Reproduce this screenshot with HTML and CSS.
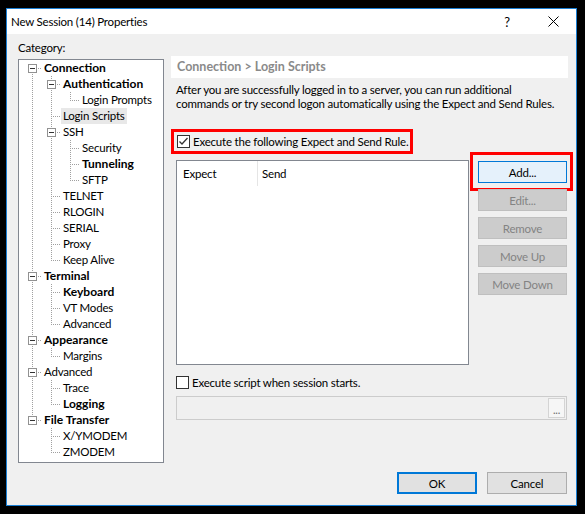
FILE: index.html
```html
<!DOCTYPE html>
<html>
<head>
<meta charset="utf-8">
<link rel="stylesheet" href="styles.css">
</head>
<body>
<div class="window">
  <div class="titlebar">
    <span class="title">New Session (14) Properties</span>
    <div class="caption-btns">
      <span class="cap help">?</span>
      <span class="cap close"><svg width="11" height="11" viewBox="0 0 11 11"><path d="M0.5 0.5 L10.5 10.5 M10.5 0.5 L0.5 10.5" stroke="#000" stroke-width="1" fill="none"/></svg></span>
    </div>
  </div>
  <div class="content">
    <div class="main">
      <div class="left">
        <div class="cat-label">Category:</div>
        <div class="tree">
          <div class="row"><span class="c first"><span class="box"></span></span><span class="t b">Connection</span></div>
          <div class="row"><span class="c pipe"></span><span class="c tee"><span class="box"></span></span><span class="t b">Authentication</span></div>
          <div class="row"><span class="c pipe"></span><span class="c pipe"></span><span class="c ell"></span><span class="t">Login Prompts</span></div>
          <div class="row"><span class="c pipe"></span><span class="c tee"></span><span class="t sel">Login Scripts</span></div>
          <div class="row"><span class="c pipe"></span><span class="c tee"><span class="box"></span></span><span class="t">SSH</span></div>
          <div class="row"><span class="c pipe"></span><span class="c pipe"></span><span class="c tee"></span><span class="t">Security</span></div>
          <div class="row"><span class="c pipe"></span><span class="c pipe"></span><span class="c tee"></span><span class="t b">Tunneling</span></div>
          <div class="row"><span class="c pipe"></span><span class="c pipe"></span><span class="c ell"></span><span class="t">SFTP</span></div>
          <div class="row"><span class="c pipe"></span><span class="c tee"></span><span class="t">TELNET</span></div>
          <div class="row"><span class="c pipe"></span><span class="c tee"></span><span class="t">RLOGIN</span></div>
          <div class="row"><span class="c pipe"></span><span class="c tee"></span><span class="t">SERIAL</span></div>
          <div class="row"><span class="c pipe"></span><span class="c tee"></span><span class="t">Proxy</span></div>
          <div class="row"><span class="c pipe"></span><span class="c ell"></span><span class="t">Keep Alive</span></div>
          <div class="row"><span class="c tee"><span class="box"></span></span><span class="t b">Terminal</span></div>
          <div class="row"><span class="c pipe"></span><span class="c tee"></span><span class="t b">Keyboard</span></div>
          <div class="row"><span class="c pipe"></span><span class="c tee"></span><span class="t">VT Modes</span></div>
          <div class="row"><span class="c pipe"></span><span class="c ell"></span><span class="t">Advanced</span></div>
          <div class="row"><span class="c tee"><span class="box"></span></span><span class="t b">Appearance</span></div>
          <div class="row"><span class="c pipe"></span><span class="c ell"></span><span class="t">Margins</span></div>
          <div class="row"><span class="c tee"><span class="box"></span></span><span class="t">Advanced</span></div>
          <div class="row"><span class="c pipe"></span><span class="c tee"></span><span class="t">Trace</span></div>
          <div class="row"><span class="c pipe"></span><span class="c ell"></span><span class="t b">Logging</span></div>
          <div class="row"><span class="c ell"><span class="box"></span></span><span class="t b">File Transfer</span></div>
          <div class="row"><span class="c"></span><span class="c tee"></span><span class="t">X/YMODEM</span></div>
          <div class="row"><span class="c"></span><span class="c ell"></span><span class="t">ZMODEM</span></div>
        </div>
      </div>
      <div class="right">
        <div class="page-header">Connection &gt; Login Scripts</div>
        <div class="pane">
          <p class="desc">After you are successfully logged in to a server, you can run additional<br>commands or try second logon automatically using the Expect and Send Rules.</p>
          <div class="check-row marked">
            <span class="cb"><svg width="11" height="11" viewBox="0 0 11 11"><path d="M1.5 5.5 L4 8 L9.5 2" stroke="#333" stroke-width="1.3" fill="none"/></svg></span>
            <span>Execute the following Expect and Send Rule.</span>
          </div>
          <div class="rules">
            <div class="listview">
              <div class="lv-head">
                <span class="col col-expect">Expect</span>
                <span class="col col-send">Send</span>
              </div>
            </div>
            <div class="rule-btns">
              <div class="mark-btn"><button class="btn btn-focus">Add...</button></div>
              <button class="btn" disabled>Edit...</button>
              <button class="btn" disabled>Remove</button>
              <button class="btn" disabled>Move Up</button>
              <button class="btn" disabled>Move Down</button>
            </div>
          </div>
          <div class="check-row plain">
            <span class="cb"></span>
            <span>Execute script when session starts.</span>
          </div>
          <div class="path-field"><span class="browse">...</span></div>
        </div>
      </div>
    </div>
    <div class="footer">
      <button class="btn btn-default">OK</button>
      <button class="btn">Cancel</button>
    </div>
  </div>
</div>
</body>
</html>
```
FILE: styles.css
```css
:root {
  --v: repeating-linear-gradient(to bottom, #a0a0a0 0 1px, transparent 1px 2px);
  --h: repeating-linear-gradient(to right, #a0a0a0 0 1px, transparent 1px 2px);
}
html, body {
  margin: 0;
  background: #000;
}
body {
  font-family: Lato, "Noto Sans", sans-serif;
  font-size: 11.5px;
  letter-spacing: -0.2px;
  color: #000;
  overflow: hidden;
}
.window {
  margin: 8px 0 0 6px;
  width: 571px;
  height: 498px;
  box-sizing: border-box;
  border: 1px solid #1a7fd4;
  background: #f0f0f0;
  display: flex;
  flex-direction: column;
}
.titlebar {
  height: 25px;
  flex: none;
  background: #fff;
  display: flex;
  align-items: center;
}
.title {
  padding-left: 4px;
}
.caption-btns {
  margin-left: auto;
  display: flex;
  height: 100%;
}
.cap {
  width: 46px;
  display: flex;
  align-items: center;
  justify-content: center;
}
.help {
  font-size: 13px;
}
.content {
  flex: 1;
  display: flex;
  flex-direction: column;
  padding: 6px 8px 11px 11px;
}
.main {
  display: flex;
  gap: 7px;
}
.left {
  width: 146px;
  flex: none;
}
.cat-label {
  line-height: 16px;
}
.tree {
  margin-top: 3px;
  height: 404px;
  box-sizing: border-box;
  border: 1px solid #828790;
  background: #fff;
  padding-left: 3px;
}
.row {
  display: flex;
  height: 16px;
}
.c {
  width: 19px;
  height: 16px;
  flex: none;
  background-repeat: no-repeat;
  box-sizing: border-box;
  padding: 4px 0 0 6px;
}
.pipe {
  background-image: var(--v);
  background-position: 10px 0;
  background-size: 1px 16px;
}
.tee {
  background-image: var(--v), var(--h);
  background-position: 10px 0, 12px 8px;
  background-size: 1px 16px, 7px 1px;
}
.ell {
  background-image: var(--v), var(--h);
  background-position: 10px 0, 12px 8px;
  background-size: 1px 9px, 7px 1px;
}
.first {
  background-image: var(--v), var(--h);
  background-position: 10px 8px, 12px 8px;
  background-size: 1px 8px, 7px 1px;
}
.box {
  width: 9px;
  height: 9px;
  box-sizing: border-box;
  border: 1px solid #919191;
  background: #fff;
  display: flex;
  align-items: center;
  justify-content: center;
}
.box::before {
  content: "";
  width: 5px;
  height: 1px;
  background: #333;
}
.t {
  margin-left: 1px;
  padding: 0 2px;
  line-height: 16px;
  white-space: nowrap;
}
.b {
  font-weight: 700;
  font-size: 12px;
  letter-spacing: 0;
}
.sel {
  background: #e8e8e8;
}
.right {
  width: 397px;
  flex: none;
  padding-top: 16px;
}
.page-header {
  height: 22px;
  line-height: 22px;
  background: #fff;
  color: #8a8a8a;
  font-weight: 700;
  font-size: 12.5px;
  letter-spacing: 0;
  padding-left: 6px;
}
.pane {
  padding-left: 5px;
}
.desc {
  margin: 5px 0 0;
  line-height: 14px;
  white-space: nowrap;
}
.check-row {
  display: flex;
  align-items: center;
  white-space: nowrap;
}
.marked {
  margin: 18px 0 0 -5px;
  width: 242px;
  height: 25px;
  box-sizing: border-box;
  border: 3px solid #ff0000;
  padding-left: 3px;
}
.plain {
  margin-top: 9px;
  height: 16px;
}
.cb {
  width: 13px;
  height: 13px;
  box-sizing: border-box;
  border: 1px solid #333;
  background: #fff;
  margin-right: 3px;
  flex: none;
  display: flex;
}
.rules {
  display: flex;
  gap: 9px;
  margin-top: 6px;
}
.listview {
  width: 293px;
  height: 205px;
  flex: none;
  box-sizing: border-box;
  border: 1px solid #828790;
  background: #fff;
}
.lv-head {
  display: flex;
  height: 25px;
}
.col {
  display: flex;
  align-items: center;
}
.col-expect {
  width: 81px;
  padding-left: 6px;
  box-sizing: border-box;
  border-right: 1px solid #e5e5e5;
}
.col-send {
  padding-left: 4px;
}
.rule-btns {
  width: 89px;
  flex: none;
  display: flex;
  flex-direction: column;
  gap: 6px;
  padding-top: 1px;
}
.btn {
  height: 22px;
  box-sizing: border-box;
  border: 1px solid #adadad;
  background: #e1e1e1;
  font: inherit;
  letter-spacing: inherit;
  color: #000;
  padding: 0;
  margin: 0;
}
.btn:disabled {
  background: #cccccc;
  border-color: #bfbfbf;
  color: #838383;
}
.btn-focus {
  width: 100%;
  background: #e5f1fb;
  border-color: #0078d7;
  display: block;
}
.mark-btn {
  border: 3px solid #ff0000;
  margin: -9px -6px -8px -8px;
  padding: 6px 3px 5px 5px;
}
.path-field {
  margin-top: 6px;
  width: 391px;
  height: 24px;
  box-sizing: border-box;
  border: 1px solid #cccccc;
  background: #f0f0f0;
  display: flex;
  justify-content: flex-end;
  padding: 1px 1px 1px 0;
}
.browse {
  width: 17px;
  box-sizing: border-box;
  border: 1px solid #d4d4d4;
  background: #f6f6f6;
  color: #6d6d6d;
  font-size: 11px;
  line-height: 14px;
  display: flex;
  align-items: flex-end;
  justify-content: center;
}
.footer {
  margin-top: auto;
  display: flex;
  justify-content: flex-end;
  gap: 10px;
  padding-right: 1px;
}
.footer .btn {
  width: 80px;
}
.btn-default {
  border: 2px solid #0078d7;
}
```
